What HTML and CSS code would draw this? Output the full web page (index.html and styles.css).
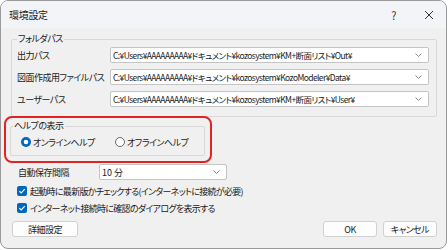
FILE: index.html
```html
<!DOCTYPE html>
<html lang="ja">
<head>
    <meta charset="UTF-8">
    <title>環境設定</title>
    <link rel="stylesheet" href="styles.css">
</head>
<body>
    <div class="window">
        <div class="titlebar">
            <span class="title">環境設定</span>
            <span class="help-btn">?</span>
            <svg class="close-btn" width="10" height="10" viewBox="0 0 10 10">
                <path d="M1 1 L9 9 M9 1 L1 9" stroke="#333" stroke-width="1" fill="none"/>
            </svg>
        </div>

        <div class="content">
            <!-- フォルダパス -->
            <fieldset class="group paths">
                <legend>フォルダパス</legend>
                <div class="path-row">
                    <label class="path-label">出力パス</label>
                    <div class="combo wide">
                        <span>C:¥Users¥AAAAAAAAA¥ドキュメント¥kozosystem¥KM+断面リスト¥Out¥</span>
                        <svg class="chev" width="7" height="4" viewBox="0 0 7 4"><path d="M0.5 0.5 L3.5 3.5 L6.5 0.5" stroke="#888" fill="none"/></svg>
                    </div>
                </div>
                <div class="path-row">
                    <label class="path-label">図面作成用ファイルパス</label>
                    <div class="combo wide">
                        <span>C:¥Users¥AAAAAAAAA¥ドキュメント¥kozosystem¥KozoModeler¥Data¥</span>
                        <svg class="chev" width="7" height="4" viewBox="0 0 7 4"><path d="M0.5 0.5 L3.5 3.5 L6.5 0.5" stroke="#888" fill="none"/></svg>
                    </div>
                </div>
                <div class="path-row">
                    <label class="path-label">ユーザーパス</label>
                    <div class="combo wide">
                        <span>C:¥Users¥AAAAAAAAA¥ドキュメント¥kozosystem¥KM+断面リスト¥User¥</span>
                        <svg class="chev" width="7" height="4" viewBox="0 0 7 4"><path d="M0.5 0.5 L3.5 3.5 L6.5 0.5" stroke="#888" fill="none"/></svg>
                    </div>
                </div>
            </fieldset>

            <!-- ヘルプの表示 -->
            <div class="highlight">
                <fieldset class="group help">
                    <legend>ヘルプの表示</legend>
                    <div class="radios">
                        <label class="radio first">
                            <svg width="10" height="10" viewBox="0 0 10 10">
                                <circle cx="5" cy="5" r="5" fill="#0067c0"/>
                                <circle cx="5" cy="5" r="2.3" fill="#fff"/>
                            </svg>
                            オンラインヘルプ
                        </label>
                        <label class="radio">
                            <svg width="10" height="10" viewBox="0 0 10 10">
                                <circle cx="5" cy="5" r="4.5" fill="#fff" stroke="#5a5a5a" stroke-width="0.9"/>
                            </svg>
                            オフラインヘルプ
                        </label>
                    </div>
                </fieldset>
            </div>

            <div class="autosave">
                <label class="autosave-label">自動保存間隔</label>
                <div class="combo short">
                    <span>10 分</span>
                    <svg class="chev" width="7" height="4" viewBox="0 0 7 4"><path d="M0.5 0.5 L3.5 3.5 L6.5 0.5" stroke="#888" fill="none"/></svg>
                </div>
            </div>

            <label class="check">
                <svg width="10" height="10" viewBox="0 0 10 10">
                    <rect width="10" height="10" rx="2" fill="#0067c0"/>
                    <path d="M2.3 5.2 L4.2 7 L7.8 3.2" stroke="#fff" stroke-width="1.1" fill="none"/>
                </svg>
                起動時に最新版かチェックする(インターネットに接続が必要)
            </label>
            <label class="check">
                <svg width="10" height="10" viewBox="0 0 10 10">
                    <rect width="10" height="10" rx="2" fill="#0067c0"/>
                    <path d="M2.3 5.2 L4.2 7 L7.8 3.2" stroke="#fff" stroke-width="1.1" fill="none"/>
                </svg>
                インターネット接続時に確認のダイアログを表示する
            </label>

            <div class="footer">
                <button class="btn detail">詳細設定</button>
                <button class="btn ok">OK</button>
                <button class="btn">キャンセル</button>
            </div>
        </div>
    </div>
</body>
</html>
```

FILE: styles.css
```css
body {
    margin: 0;
    padding: 0;
    background-color: #ffffff;
}
.window {
    width: 445px;
    height: 247px;
    border: 1px solid #9a9a9a;
    border-radius: 8px;
    background-color: #f0f0f0;
    overflow: hidden;
    font-family: "Noto Sans CJK JP", sans-serif;
    font-size: 9px;
    letter-spacing: -0.5px;
    color: #1a1a1a;
    font-feature-settings: "palt";
    white-space: nowrap;
}
.titlebar {
    height: 27px;
    display: flex;
    align-items: center;
    padding: 0 0 0 8px;
    background-color: #f2f4f8;
}
.title {
    font-size: 10px;
    letter-spacing: -0.3px;
    flex: 1;
}
.help-btn {
    font-size: 11px;
    margin-right: 28px;
    color: #333;
}
.close-btn {
    margin-right: 12px;
}
.content {
    padding: 0 9px 0 10px;
}
.group {
    margin: 0;
    border: 1px solid #d8d8d8;
    border-radius: 2px;
}
.group legend {
    padding: 0 1px;
    line-height: 12px;
}
.paths {
    margin-top: 5px;
    padding: 1px 7px 9px 5px;
}
.path-row {
    display: flex;
    align-items: center;
    height: 16px;
    margin-top: 6px;
}
.path-row:first-of-type {
    margin-top: 1px;
}
.path-label {
    width: 93px;
    flex: none;
}
.combo {
    box-sizing: border-box;
    height: 16px;
    background-color: #ffffff;
    border: 1px solid #c4c4c4;
    border-radius: 2px;
    display: flex;
    align-items: center;
    padding: 0 6px 0 2px;
    overflow: hidden;
}
.combo span {
    flex: 1;
    font-size: 8.5px;
    letter-spacing: -0.6px;
}
.combo.wide {
    width: 319px;
}
.combo.short {
    width: 128px;
}
.combo.short span {
    font-size: 9px;
    letter-spacing: 0;
}
.chev {
    flex: none;
}
.highlight {
    margin: -1px 225px 0 -7px;
    border: 2px solid #e02424;
    border-radius: 8px;
    padding: 2px 5px 5px 4px;
}
.help {
    padding: 0 0 7px 2px;
}
.radios {
    display: flex;
    align-items: center;
    height: 12px;
    margin-top: 4px;
    padding-left: 8px;
}
.radio {
    display: flex;
    align-items: center;
    gap: 2px;
}
.radio.first {
    width: 94px;
}
.autosave {
    display: flex;
    align-items: center;
    margin-top: 1px;
    padding-left: 7px;
}
.autosave-label {
    width: 81px;
}
.check {
    display: flex;
    align-items: center;
    gap: 3px;
    height: 12px;
    margin-left: 6px;
    margin-top: 5px;
    letter-spacing: -0.7px;
}
.footer {
    display: flex;
    margin-top: 7px;
    padding-left: 1px;
}
.btn {
    box-sizing: border-box;
    height: 16px;
    width: 54px;
    padding: 0;
    font-family: inherit;
    font-size: 9px;
    letter-spacing: -0.5px;
    font-feature-settings: "palt";
    color: #1a1a1a;
    background-color: #fdfdfd;
    border: 1px solid #d0d0d0;
    border-radius: 3px;
    margin-left: 6px;
}
.btn.detail {
    width: 66px;
    margin-left: 0;
    margin-right: auto;
}
```
